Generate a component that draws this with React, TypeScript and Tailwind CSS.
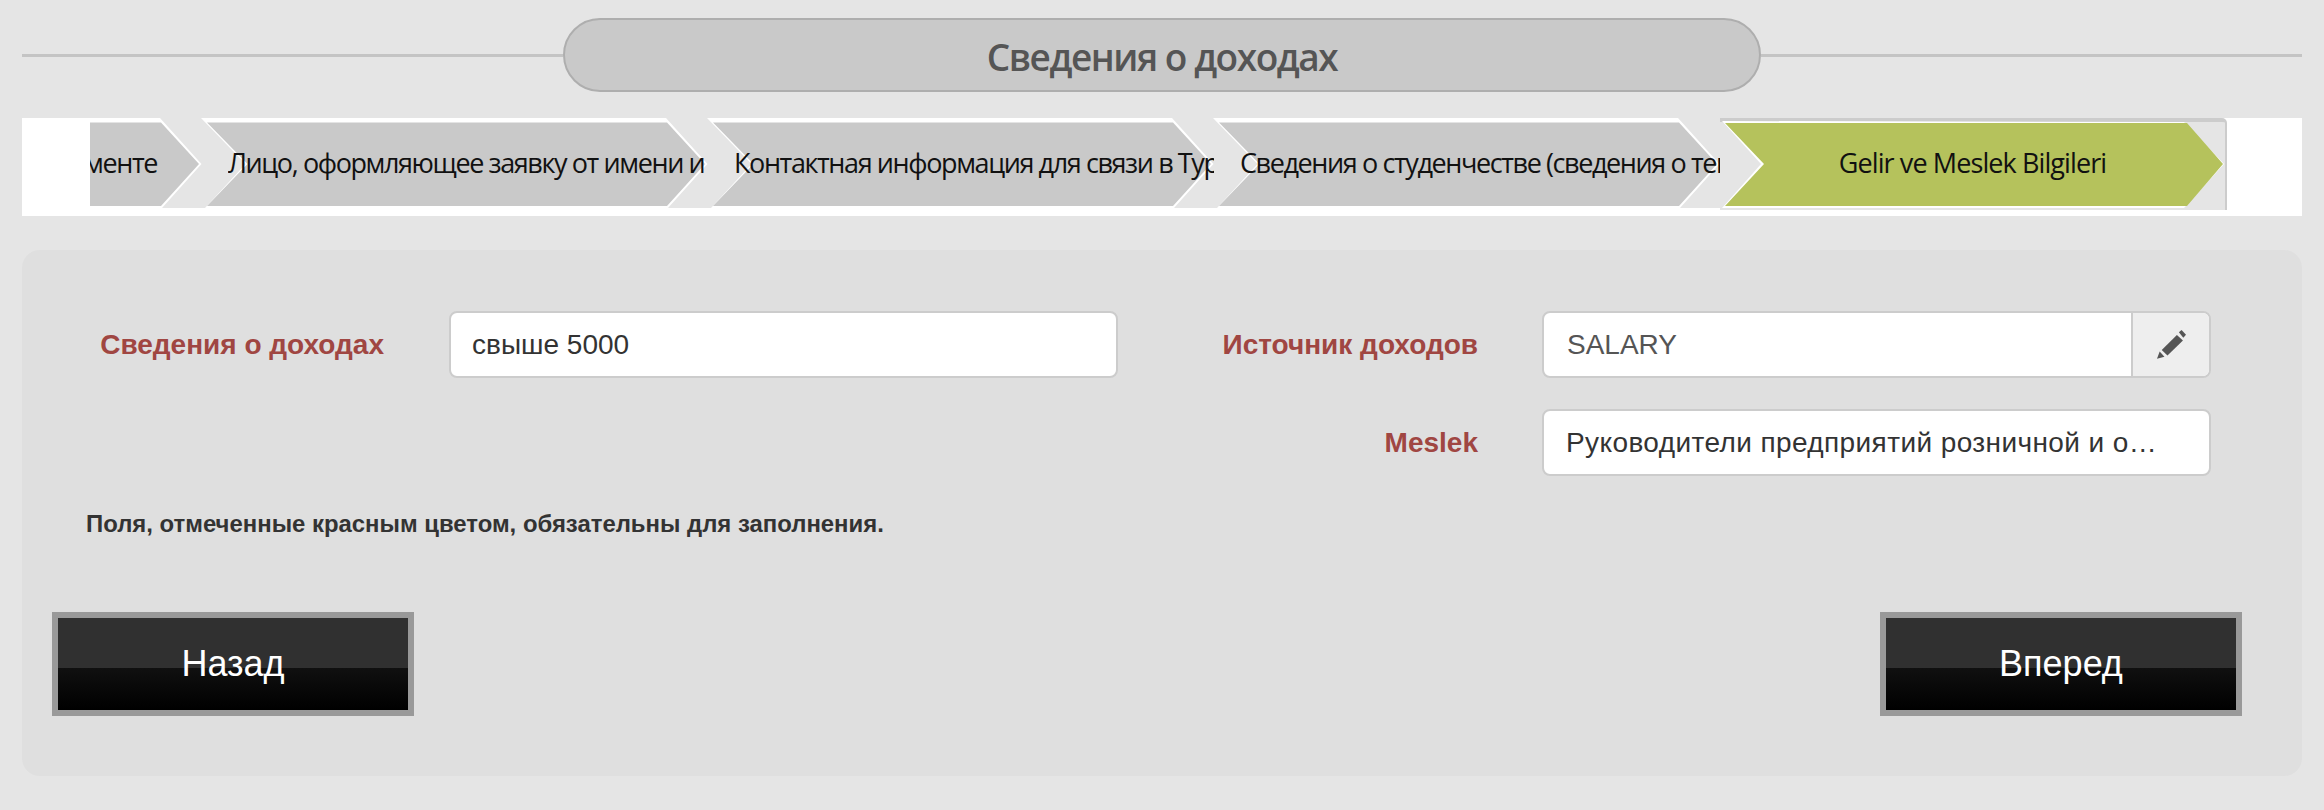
import React from "react";

const sans = "font-['Liberation_Sans',Arial,sans-serif]";
const myriad = "font-['Open_Sans','Noto_Sans',sans-serif]";

function Chevron({ text, className = "", textClass = "ml-[21px]" }: { text: string; className?: string; textClass?: string }) {
  return (
    <div className={`relative h-[90px] w-[506px] shrink-0 ${className}`}>
      <svg className="absolute left-0 top-0 overflow-visible" width="506" height="90">
        <polygon points="-6,0 459,0 500.5,46 461,90 -2,90 38.5,46" fill="#ffffff" />
        <polygon points="0,4.5 460,4.5 498,46 460,88 0,88 40.5,46" fill="#c9c9c9" />
      </svg>
      <div className={`relative w-[480px] overflow-hidden whitespace-nowrap pt-[26px] text-[27px] leading-[38px] tracking-[-1.4px] text-[#111] ${textClass} ${myriad}`}>
        {text}
      </div>
    </div>
  );
}

function Field({ label, gap, children }: { label: string; gap: string; children: React.ReactNode }) {
  return (
    <div className={`flex items-center justify-end ${gap}`}>
      <label className={`text-[28px] font-bold text-[#a04642] ${sans}`}>{label}</label>
      {children}
    </div>
  );
}

function NavButton({ label }: { label: string }) {
  return (
    <button className={`h-[104px] w-[362px] border-[6px] border-[#999999] bg-[linear-gradient(#303030_0,#303030_54.5%,#101010_54.5%,#000000_100%)] text-[36px] text-white ${sans}`}>
      {label}
    </button>
  );
}

export default function App() {
  return (
    <div className="h-[810px] w-[2324px] overflow-hidden bg-[#e5e5e5] px-[22px] pt-[18px]">
      <div className="flex items-center">
        <div className="h-[3px] flex-1 bg-[#c4c4c4]" />
        <h1 className={`flex h-[74px] w-[1198px] items-center justify-center rounded-[37px] border-2 border-[#aeaeae] bg-[#c9c9c9] pt-[4px] text-[37px] font-semibold tracking-[-1.45px] text-[#555555] ${myriad}`}>
          Сведения о доходах
        </h1>
        <div className="h-[3px] flex-1 bg-[#c4c4c4]" />
      </div>

      <div className="mt-[26px] h-[98px] bg-white pl-[68px]">
        <div className="flex h-[92px] w-[2137px] items-start overflow-hidden">
          <div className="flex h-[90px] w-[1630px] shrink-0 overflow-hidden bg-[#e5e5e5]">
            <Chevron text="Информация о дорожном документе" className="ml-[-389px]" textClass="ml-[12px]" />
            <Chevron text="Лицо, оформляющее заявку от имени и от лица заявителя" />
            <Chevron text="Контактная информация для связи в Турции и за рубежом" />
            <Chevron text="Сведения о студенчестве (сведения о текущем обучении)" />
          </div>
          <div className="relative h-[92px] w-[507px] shrink-0 rounded-tr-[5px] border-r-2 border-t-4 border-[#cccccc] bg-[#e5e5e5]">
            <svg className="absolute left-0 top-[-4px]" width="505" height="92">
              <polygon points="2,3 464,4 504,46 464,90 2,90 41,46" fill="#ffffff" />
              <polygon points="5,5 467,5 503,46 467,88 5,88 44,46" fill="#b5c25c" />
            </svg>
            <div className={`relative pt-[22px] text-center text-[27px] leading-[38px] tracking-[-0.9px] text-[#111] ${myriad}`}>
              Gelir ve Meslek Bilgileri
            </div>
          </div>
        </div>
      </div>

      <div className="mt-[34px] h-[526px] rounded-[18px] bg-[#dfdfdf] pt-[61px]">
        <div className="flex items-start">
          <div className="w-[1096px]">
            <Field label="Сведения о доходах" gap="gap-[65px]">
              <div className={`flex h-[67px] w-[669px] items-center rounded-[8px] border-2 border-[#cccccc] bg-white px-[21px] text-[28px] text-[#333] ${sans}`}>
                свыше 5000
              </div>
            </Field>
          </div>
          <div className="flex w-[1093px] flex-col gap-[31px]">
            <Field label="Источник доходов" gap="gap-[64px]">
              <div className={`flex h-[67px] w-[669px] items-stretch overflow-hidden rounded-[8px] border-2 border-[#cccccc] bg-white text-[28px] text-[#555] ${sans}`}>
                <div className="flex flex-1 items-center px-[23px]">SALARY</div>
                <div className="flex w-[78px] items-center justify-center border-l-2 border-[#cccccc] bg-[#eeeeee]">
                  <svg width="31" height="31" viewBox="110 70 92 92" fill="#555555">
                    <polygon points="113,158 121,137 135,152" />
                    <polygon points="127,132 172,88 190,104 144,149" />
                    <polygon points="178,80 186,73 199,87 191,96" />
                  </svg>
                </div>
              </div>
            </Field>
            <Field label="Meslek" gap="gap-[64px]">
              <div className={`flex h-[67px] w-[669px] items-center rounded-[8px] border-2 border-[#cccccc] bg-white pl-[22px] pr-[44px] text-[28px] tracking-[0.4px] text-[#333] ${sans}`}>
                <span className="truncate">Руководители предприятий розничной и оптовой торговли</span>
              </div>
            </Field>
          </div>
        </div>

        <p className={`ml-[64px] mt-[30px] text-[23.9px] font-bold leading-[36px] text-[#333] ${sans}`}>
          Поля, отмеченные красным цветом, обязательны для заполнения.
        </p>

        <div className="ml-[30px] mr-[60px] mt-[70px] flex justify-between">
          <NavButton label="Назад" />
          <NavButton label="Вперед" />
        </div>
      </div>
    </div>
  );
}
